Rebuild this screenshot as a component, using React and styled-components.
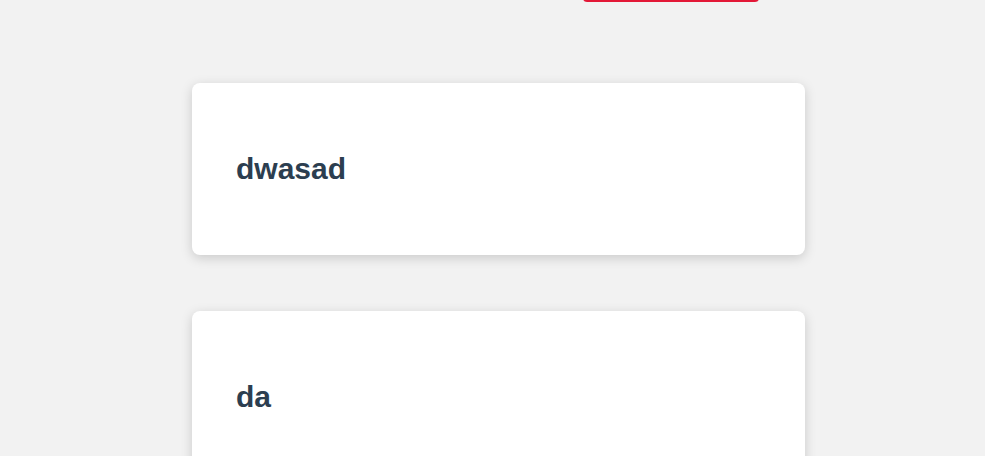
import styled, { createGlobalStyle } from "styled-components";

const GlobalStyle = createGlobalStyle`
  html, body {
    margin: 0;
    padding: 0;
    background: #f2f2f2;
    font-family: "Liberation Sans", Arial, sans-serif;
    color: #2c3e50;
    overflow: hidden;
  }
`;

const posts = [
  { id: 1, title: "dwasad" },
  { id: 2, title: "da" },
];

const Page = () => (
  <>
    <GlobalStyle />
    <Wrapper>
      <Toolbar>
        <AddButton aria-label="New post" />
      </Toolbar>
      <List>
        {posts.map((post) => (
          <Card key={post.id}>
            <Title>{post.title}</Title>
          </Card>
        ))}
      </List>
    </Wrapper>
  </>
);

export default Page;

const Wrapper = styled.div`
  width: 985px;
  height: 456px;
  overflow: hidden;
  background: #f2f2f2;
`;

const Toolbar = styled.div`
  display: flex;
  padding-left: 583px;
  height: 2px;
`;

const AddButton = styled.button`
  flex: none;
  width: 176px;
  height: 40px;
  margin-top: -38px;
  border: none;
  border-radius: 4px;
  background: #e31837;
`;

const List = styled.div`
  display: flex;
  flex-direction: column;
  gap: 56px;
  padding: 81px 0 0 192px;
`;

const Card = styled.div`
  flex: none;
  width: 613px;
  height: 172px;
  box-sizing: border-box;
  padding: 0 44px;
  display: flex;
  align-items: center;
  background: #fff;
  border-radius: 8px;
  box-shadow: 0 3px 12px rgba(0, 0, 0, 0.17);
`;

const Title = styled.h2`
  margin: 0;
  font-size: 30px;
  font-weight: 700;
  color: #2c3e50;
`;
